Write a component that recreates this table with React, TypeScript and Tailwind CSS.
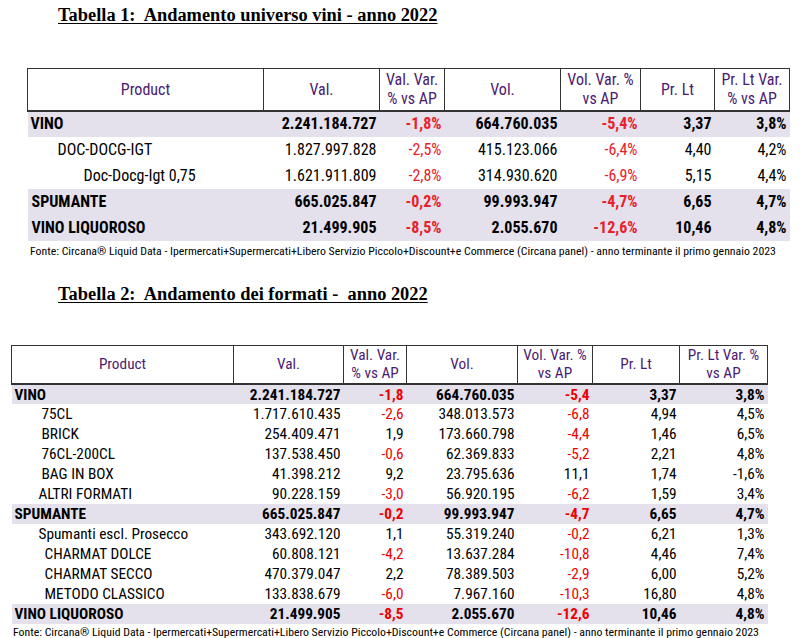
import React from "react";

type Row = {
  name: string;
  indent: number;
  bold?: boolean;
  shade?: boolean;
  cells: [string, string, string, string, string, string];
  red: [boolean, boolean, boolean, boolean, boolean, boolean];
};

const t1: Row[] = [
  { name: "VINO", indent: 3, bold: true, shade: true, cells: ["2.241.184.727", "-1,8%", "664.760.035", "-5,4%", "3,37", "3,8%"], red: [false, true, false, true, false, false] },
  { name: "DOC-DOCG-IGT", indent: 30, cells: ["1.827.997.828", "-2,5%", "415.123.066", "-6,4%", "4,40", "4,2%"], red: [false, true, false, true, false, false] },
  { name: "Doc-Docg-Igt 0,75", indent: 56, cells: ["1.621.911.809", "-2,8%", "314.930.620", "-6,9%", "5,15", "4,4%"], red: [false, true, false, true, false, false] },
  { name: "SPUMANTE", indent: 4, bold: true, shade: true, cells: ["665.025.847", "-0,2%", "99.993.947", "-4,7%", "6,65", "4,7%"], red: [false, true, false, true, false, false] },
  { name: "VINO LIQUOROSO", indent: 4, bold: true, shade: true, cells: ["21.499.905", "-8,5%", "2.055.670", "-12,6%", "10,46", "4,8%"], red: [false, true, false, true, false, false] },
];

const t2: Row[] = [
  { name: "VINO", indent: 3, bold: true, shade: true, cells: ["2.241.184.727", "-1,8", "664.760.035", "-5,4", "3,37", "3,8%"], red: [false, true, false, true, false, false] },
  { name: "75CL", indent: 30, cells: ["1.717.610.435", "-2,6", "348.013.573", "-6,8", "4,94", "4,5%"], red: [false, true, false, true, false, false] },
  { name: "BRICK", indent: 30, cells: ["254.409.471", "1,9", "173.660.798", "-4,4", "1,46", "6,5%"], red: [false, false, false, true, false, false] },
  { name: "76CL-200CL", indent: 30, cells: ["137.538.450", "-0,6", "62.369.833", "-5,2", "2,21", "4,8%"], red: [false, true, false, true, false, false] },
  { name: "BAG IN BOX", indent: 30, cells: ["41.398.212", "9,2", "23.795.636", "11,1", "1,74", "-1,6%"], red: [false, false, false, false, false, false] },
  { name: "ALTRI FORMATI", indent: 27, cells: ["90.228.159", "-3,0", "56.920.195", "-6,2", "1,59", "3,4%"], red: [false, true, false, true, false, false] },
  { name: "SPUMANTE", indent: 3, bold: true, shade: true, cells: ["665.025.847", "-0,2", "99.993.947", "-4,7", "6,65", "4,7%"], red: [false, true, false, true, false, false] },
  { name: "Spumanti escl. Prosecco", indent: 27, cells: ["343.692.120", "1,1", "55.319.240", "-0,2", "6,21", "1,3%"], red: [false, false, false, true, false, false] },
  { name: "CHARMAT DOLCE", indent: 33, cells: ["60.808.121", "-4,2", "13.637.284", "-10,8", "4,46", "7,4%"], red: [false, true, false, true, false, false] },
  { name: "CHARMAT SECCO", indent: 33, cells: ["470.379.047", "2,2", "78.389.503", "-2,9", "6,00", "5,2%"], red: [false, false, false, true, false, false] },
  { name: "METODO CLASSICO", indent: 33, cells: ["133.838.679", "-6,0", "7.967.160", "-10,3", "16,80", "4,8%"], red: [false, true, false, true, false, false] },
  { name: "VINO LIQUOROSO", indent: 3, bold: true, shade: true, cells: ["21.499.905", "-8,5", "2.055.670", "-12,6", "10,46", "4,8%"], red: [false, true, false, true, false, false] },
];

const FONT = "font-['Roboto_Condensed','Roboto',sans-serif] [font-stretch:87.5%]";

function Header({ widths, h, size, lead, lastLabel }: { widths: number[]; h: string; size: string; lead: string; lastLabel: React.ReactNode }) {
  const labels: React.ReactNode[] = [
    "Product",
    "Val.",
    <>Val. Var.<br />% vs AP</>,
    "Vol.",
    <>Vol. Var. %<br />vs AP</>,
    "Pr. Lt",
    lastLabel,
  ];
  return (
    <thead>
      <tr className={`${h} border border-[#333] border-b-2`}>
        {labels.map((l, i) => (
          <th
            key={i}
            style={{ width: widths[i] }}
            className={`${i < 6 ? "border-r border-[#333]" : ""} text-center font-normal text-[#4b1a72] ${size} ${lead} p-0 whitespace-nowrap overflow-hidden`}
          >
            {l}
          </th>
        ))}
      </tr>
    </thead>
  );
}

function Table({ rows, widths, headH, rowH, size, headSize, lead, redC, lastLabel }: { rows: Row[]; widths: number[]; headH: string; rowH: string; size: string; headSize: string; lead: string; redC: string; lastLabel: React.ReactNode }) {
  return (
    <table className={`table-fixed border-collapse ${FONT}`}>
      <Header widths={widths} h={headH} size={headSize} lead={lead} lastLabel={lastLabel} />
      <tbody>
        {rows.map((r, i) => (
          <tr key={i} className={`${rowH} ${r.shade ? "bg-[#e4e0ec]" : ""} ${r.bold ? "font-bold" : ""} ${size} leading-[18px] text-black`}>
            <td className="p-0 whitespace-nowrap" style={{ paddingLeft: r.indent }}>
              {r.name}
            </td>
            {r.cells.map((c, j) => (
              <td key={j} className={`p-0 pr-[3px] text-right whitespace-nowrap ${r.red[j] ? redC : ""}`}>
                {c}
              </td>
            ))}
          </tr>
        ))}
      </tbody>
    </table>
  );
}

export default function App() {
  return (
    <div className="w-[800px] h-[638px] bg-white relative overflow-hidden">
      <div className="pt-[5px] pl-[58px] font-['Liberation_Serif',serif] font-bold text-[18.4px] leading-[20px] text-black">
        <span className="underline underline-offset-[2px] whitespace-pre">Tabella 1:  Andamento universo vini - anno 2022</span>
      </div>
      <div className="pl-[27px] mt-[43px]">
        <Table
          rows={t1}
          widths={[236, 116, 65, 116, 80, 74, 75]}
          headH="h-[42px]"
          rowH="h-[26px]"
          size="text-[16px]"
          headSize="text-[16px]"
          lead="leading-[19px]"
          redC="text-[#e8202a]"
          lastLabel={<>Pr. Lt Var.<br />% vs AP</>}
        />
      </div>
      <div className={`pl-[30px] mt-[3px] text-[11.8px] leading-[14px] ${FONT} text-black whitespace-nowrap`}>
        Fonte: Circana® Liquid Data - Ipermercati+Supermercati+Libero Servizio Piccolo+Discount+e Commerce (Circana panel) - anno terminante il primo gennaio 2023
      </div>
      <div className="pt-[26px] pl-[58px] font-['Liberation_Serif',serif] font-bold text-[18.4px] leading-[20px] text-black">
        <span className="underline underline-offset-[2px] whitespace-pre">Tabella 2:  Andamento dei formati -  anno 2022</span>
      </div>
      <div className="pl-[11px] mt-[41px]">
        <Table
          rows={t2}
          widths={[222, 110, 63, 111, 75, 87, 88]}
          headH="h-[39px]"
          rowH="h-[20px]"
          size="text-[15.3px]"
          headSize="text-[15.3px]"
          lead="leading-[18px]"
          redC="text-[#ee0000]"
          lastLabel={<>Pr. Lt Var. %<br />vs AP</>}
        />
      </div>
      <div className={`pl-[13px] mt-[1px] text-[11.8px] leading-[14px] ${FONT} text-black whitespace-nowrap`}>
        Fonte: Circana® Liquid Data - Ipermercati+Supermercati+Libero Servizio Piccolo+Discount+e Commerce (Circana panel) - anno terminante il primo gennaio 2023
      </div>
    </div>
  );
}
